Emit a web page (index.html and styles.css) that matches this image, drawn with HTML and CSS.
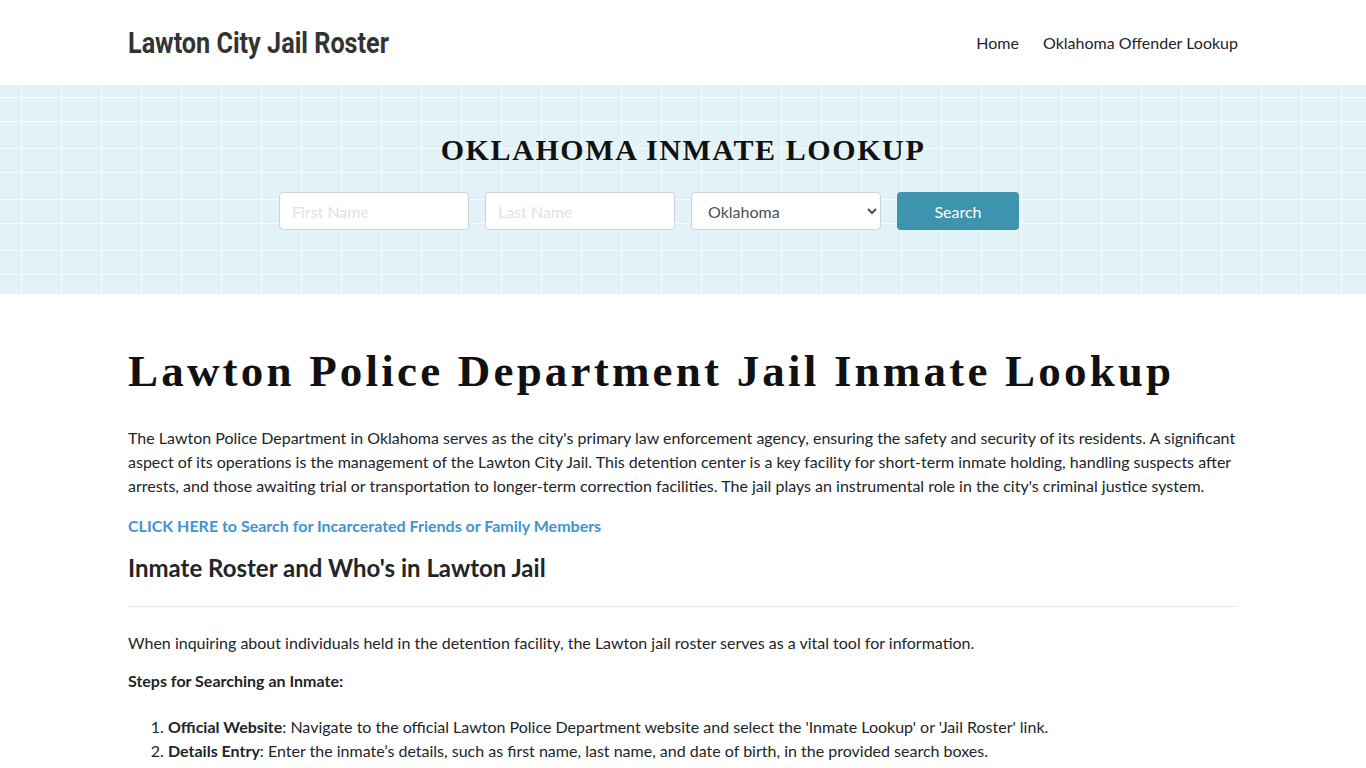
FILE: index.html
```html
<!DOCTYPE html>
<html lang="en">
<head>
<meta charset="utf-8">
<title>Lawton City Jail Roster</title>
<link rel="stylesheet" href="styles.css">
</head>
<body>
<header class="site-header">
  <div class="container header-inner">
    <a class="logo" href="#">Lawton City Jail Roster</a>
    <nav class="nav">
      <a href="#">Home</a>
      <a href="#">Oklahoma Offender Lookup</a>
    </nav>
  </div>
</header>
<section class="hero">
  <h2 class="hero-title">OKLAHOMA INMATE LOOKUP</h2>
  <form class="search-form">
    <input class="field" type="text" placeholder="First Name">
    <input class="field" type="text" placeholder="Last Name">
    <select class="field select">
      <option>Oklahoma</option>
    </select>
    <button class="btn" type="button">Search</button>
  </form>
</section>
<main class="container content">
  <h1 class="page-title">Lawton Police Department Jail Inmate Lookup</h1>
  <p>The Lawton Police Department in Oklahoma serves as the city's primary law enforcement agency, ensuring the safety and security of its residents. A significant aspect of its operations is the management of the Lawton City Jail. This detention center is a key facility for short-term inmate holding, handling suspects after arrests, and those awaiting trial or transportation to longer-term correction facilities. The jail plays an instrumental role in the city's criminal justice system.</p>
  <p class="cta"><a href="#">CLICK HERE to Search for Incarcerated Friends or Family Members</a></p>
  <h2 class="section-title">Inmate Roster and Who's in Lawton Jail</h2>
  <hr class="divider">
  <p class="intro">When inquiring about individuals held in the detention facility, the Lawton jail roster serves as a vital tool for information.</p>
  <p><strong>Steps for Searching an Inmate:</strong></p>
  <ol class="steps">
    <li><strong>Official Website</strong>: Navigate to the official Lawton Police Department website and select the 'Inmate Lookup' or 'Jail Roster' link.</li>
    <li><strong>Details Entry</strong>: Enter the inmate’s details, such as first name, last name, and date of birth, in the provided search boxes.</li>
    <li><strong>Review Results</strong>: Browse the list of results and select the correct inmate to view booking details.</li>
  </ol>
</main>
</body>
</html>
```
FILE: styles.css
```css
* { box-sizing: border-box; }
html, body { margin: 0; padding: 0; }
body {
  font-family: Lato, "Noto Sans", sans-serif;
  font-size: 16px;
  line-height: 24px;
  color: #212529;
  background: #fff;
}
a { text-decoration: none; }
.container {
  width: 1110px;
  margin: 0 auto;
}
.site-header { height: 85px; }
.header-inner {
  height: 85px;
  display: flex;
  align-items: center;
  justify-content: space-between;
}
.logo {
  display: inline-block;
  font-family: Roboto, "DejaVu Sans", sans-serif;
  font-weight: 700;
  font-size: 30px;
  line-height: 34px;
  color: #333;
  transform: scaleX(0.84);
  transform-origin: left center;
  white-space: nowrap;
}
.nav {
  display: flex;
  gap: 24px;
}
.nav a {
  color: #212529;
  font-size: 16px;
}
.hero {
  height: 209px;
  background-color: #e3f2f7;
  background-image:
    repeating-linear-gradient(90deg, transparent 0 21px, rgba(255,255,255,0.7) 21px 22.5px, transparent 22.5px 40px),
    linear-gradient(180deg, rgba(255,255,255,0.7) 0 1.5px, transparent 1.5px 24px, rgba(255,255,255,0.7) 24px 25.5px, transparent 25.5px 51px);
  background-size: 40px 100%, 100% 51px;
  background-position: 0 0, 0 12px;
  background-repeat: repeat;
  display: flex;
  flex-direction: column;
  align-items: center;
  padding-top: 47px;
}
.hero-title {
  margin: 0;
  font-family: "Liberation Serif", "Times New Roman", serif;
  font-weight: 700;
  font-size: 30px;
  line-height: 36px;
  letter-spacing: 1.6px;
  color: #111;
}
.search-form {
  margin-top: 24px;
  margin-right: 68px;
  display: flex;
  gap: 16px;
}
.field {
  width: 190px;
  height: 38px;
  border: 1px solid #ced4da;
  border-radius: 4px;
  background: #fff;
  padding: 0 12px;
  font-family: Lato, sans-serif;
  font-size: 16px;
  color: #495057;
}
.field::placeholder { color: #e2e2e2; }
.select { padding: 0 10px 0 12px; }
.btn {
  width: 122px;
  height: 38px;
  border: none;
  border-radius: 4px;
  background: #3e94ae;
  color: #fff;
  font-family: Lato, sans-serif;
  font-size: 16px;
}
.content { padding-top: 49px; }
.page-title {
  margin: 0 0 27px;
  font-family: "Liberation Serif", "Times New Roman", serif;
  font-weight: 700;
  font-size: 45px;
  line-height: 56px;
  letter-spacing: 3.2px;
  color: #111;
}
.content p { margin: 0 0 16px; }
.content p.cta { margin-bottom: 14px; }
.content p.intro { margin-bottom: 14px; }
.cta a {
  color: #3d96d0;
  font-weight: 700;
}
.section-title {
  margin: 0;
  font-size: 24px;
  line-height: 32px;
  font-weight: 700;
  color: #212529;
}
.divider {
  margin: 22px 0 24px;
  border: 0;
  border-top: 1px solid #eaeaea;
}
.steps {
  margin: 22px 0 0;
  padding-left: 40px;
}
.steps li { margin: 0; }
```
